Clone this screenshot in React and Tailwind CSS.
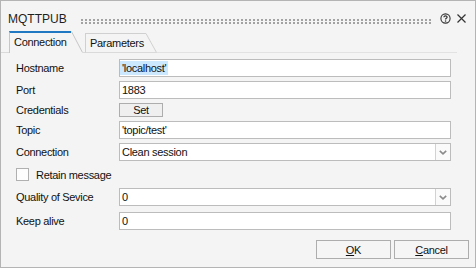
import React from "react";

const txt = "text-[11px] tracking-[-0.3px] text-[#111]";

function Field({ children, selected }) {
  return (
    <div className="h-[18px] w-[332px] border border-[#bcbcbc] bg-white flex items-center">
      {selected ? (
        <span className={`${txt} h-[14px] leading-[14px] bg-[#cce8ff] pl-[2px] pr-[2px]`}>{children}</span>
      ) : (
        <span className={`${txt} leading-[14px] pl-[2px]`}>{children}</span>
      )}
    </div>
  );
}

function Chevron() {
  return (
    <svg width="8" height="5" viewBox="0 0 8 5">
      <path d="M0.8 0.8 L4 3.8 L7.2 0.8" fill="none" stroke="#8a8a8a" strokeWidth="1.6" />
    </svg>
  );
}

function Select({ children }) {
  return (
    <div className="h-[18px] w-[332px] border border-[#bcbcbc] bg-white flex items-stretch">
      <div className="flex-1 flex items-center">
        <span className={`${txt} leading-[14px] pl-[2px]`}>{children}</span>
      </div>
      <div className="w-[15px] border-l border-[#d2d2d2] bg-[#fafafa] flex items-center justify-center">
        <Chevron />
      </div>
    </div>
  );
}

function Row({ label, children, className = "" }) {
  return (
    <div className={`flex items-center ${className}`}>
      <div className={`w-[103px] ${txt} leading-[14px]`}>{label}</div>
      {children}
    </div>
  );
}

export default function App() {
  return (
    <div className="w-[476px] h-[268px] border border-[#b4b4b4] bg-[#f4f4f4] font-['Liberation_Sans',Arial,sans-serif] flex flex-col">
      {/* title bar */}
      <div className="h-[30px] flex items-start pt-[11px] pl-[7px]">
        <div className="w-[72px] text-[12px] leading-[14px] text-[#1f1f1f]">MQTTPUB</div>
        <svg width="352" height="5" className="mt-[7px]">
          <defs>
            <pattern id="grip" x="1" y="0" width="4" height="3" patternUnits="userSpaceOnUse">
              <rect width="2" height="2" fill="#a2a2a2" />
            </pattern>
          </defs>
          <rect width="352" height="5" fill="url(#grip)" />
        </svg>
        <svg width="11" height="11" viewBox="0 0 11 11" className="mt-[1px] ml-[8px]">
          <circle cx="5.5" cy="5.5" r="4.6" fill="none" stroke="#333" strokeWidth="1.1" />
          <path d="M3.9 4.3 C3.9 2.4 7.1 2.4 7.1 4.2 C7.1 5.3 5.5 5.3 5.5 6.6" fill="none" stroke="#333" strokeWidth="1.2" />
          <rect x="4.9" y="7.4" width="1.3" height="1.3" fill="#333" />
        </svg>
        <svg width="9" height="9" viewBox="0 0 9 9" className="mt-[2px] ml-[6px]">
          <path d="M0.5 0.5 L8.5 8.5 M8.5 0.5 L0.5 8.5" stroke="#333" strokeWidth="1.2" />
        </svg>
      </div>

      {/* tab strip */}
      <div className="h-[22px] flex items-end">
        <div className="w-[8px] h-full border-b border-[#dadada]" />
        <div className="w-[62px] h-[22px] border-l border-[#c6c6c6] border-t-2 border-t-[#1f78c1] flex items-center pl-[4px] pb-[2px]">
          <span className={`${txt} leading-[14px]`}>Connection</span>
        </div>
        <svg width="12" height="22" className="block">
          <path d="M0.5 0.5 L11.5 21.5" stroke="#c6c6c6" strokeWidth="1" fill="none" />
        </svg>
        <div className="w-[2px] h-full border-b border-[#dadada]" />
        <div className="w-[61px] h-[20px] border-l border-t border-b border-[#d0d0d0] border-b-[#dadada] flex items-center pl-[4px]">
          <span className={`${txt} leading-[14px]`}>Parameters</span>
        </div>
        <svg width="11" height="20" className="block">
          <path d="M0 0.5 L10.5 19.5" stroke="#d0d0d0" strokeWidth="1" fill="none" />
          <path d="M0 19.5 L11 19.5" stroke="#dadada" strokeWidth="1" />
        </svg>
        <div className="w-[300px] h-full border-b border-[#e2e2e2]" />
      </div>

      {/* form */}
      <div className="flex flex-col pl-[15px] pt-[6px]">
        <Row label="Hostname">
          <Field selected>'localhost'</Field>
        </Row>
        <Row label="Port" className="mt-[4px]">
          <Field>1883</Field>
        </Row>
        <Row label="Credentials" className="mt-[4px]">
          <div className="h-[14px] w-[44px] border border-[#adadad] bg-[#efefef] flex items-center justify-center">
            <span className={`${txt} leading-[12px]`}>Set</span>
          </div>
        </Row>
        <Row label="Topic" className="mt-[4px]">
          <Field>'topic/test'</Field>
        </Row>
        <Row label="Connection" className="mt-[4px]">
          <Select>Clean session</Select>
        </Row>
        <div className="flex items-center mt-[7px] h-[13px]">
          <div className="w-[13px] h-[13px] border border-[#b0b0b0] bg-[#fdfdfd]" />
          <span className={`${txt} leading-[14px] ml-[7px] mt-[1px]`}>Retain message</span>
        </div>
        <Row label="Quality of Sevice" className="mt-[7px]">
          <Select>0</Select>
        </Row>
        <Row label="Keep alive" className="mt-[6px]">
          <Field>0</Field>
        </Row>
        <div className="flex justify-end gap-[3px] mt-[10px] pr-[6px]">
          <div className="w-[75px] h-[19px] border border-[#adadad] bg-[#f5f5f5] flex items-center justify-center">
            <span className={`${txt} leading-[14px]`}>
              <span className="underline underline-offset-[1px]">O</span>K
            </span>
          </div>
          <div className="w-[75px] h-[19px] border border-[#adadad] bg-[#f5f5f5] flex items-center justify-center">
            <span className={`${txt} leading-[14px]`}>
              <span className="underline underline-offset-[1px]">C</span>ancel
            </span>
          </div>
        </div>
      </div>
    </div>
  );
}
